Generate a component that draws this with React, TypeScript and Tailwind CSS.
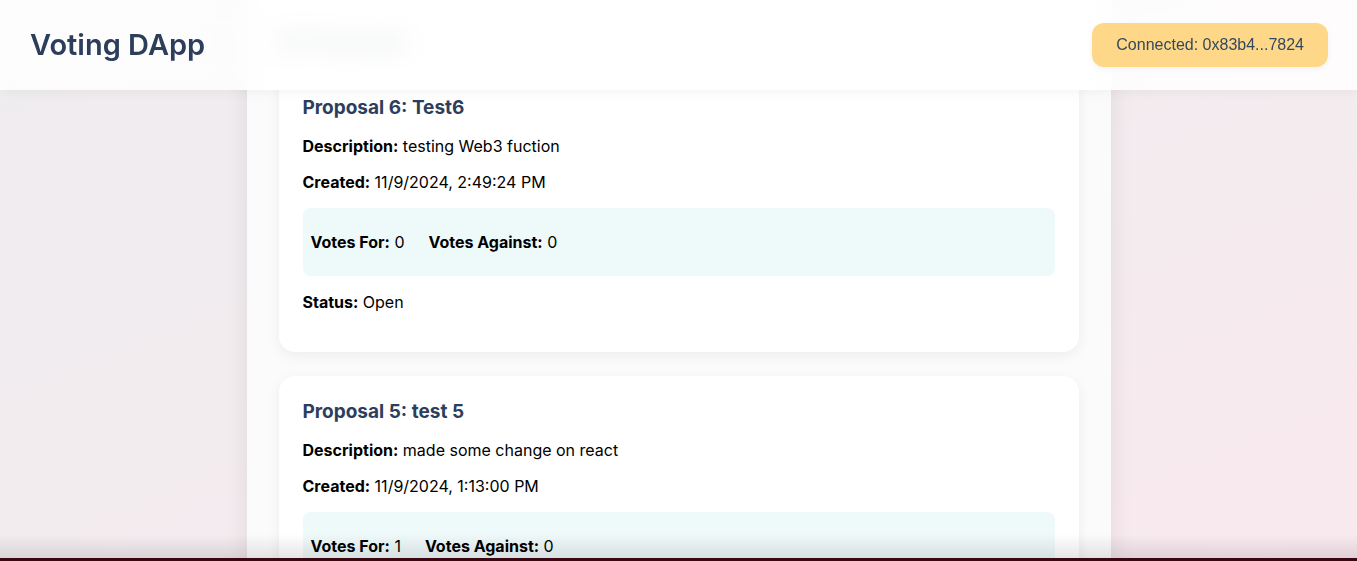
import React from 'react';

type Proposal = {
  id: number;
  name: string;
  description: string;
  created: string;
  votesFor: number;
  votesAgainst: number;
  open: boolean;
};

const proposals: Proposal[] = [
  { id: 6, name: 'Test6', description: 'testing Web3 fuction', created: '11/9/2024, 2:49:24 PM', votesFor: 0, votesAgainst: 0, open: true },
  { id: 5, name: 'test 5', description: 'made some change on react', created: '11/9/2024, 1:13:00 PM', votesFor: 1, votesAgainst: 0, open: true },
];

const ProposalCard: React.FC<{ p: Proposal }> = ({ p }) => (
  <div className="bg-white rounded-2xl p-6 shadow-[0_4px_14px_rgba(0,0,0,0.06)] flex flex-col gap-4">
    <h3 className="text-[19px] leading-6 font-bold text-[#2c3e5c]">
      Proposal {p.id}: {p.name}
    </h3>
    <p className="leading-5">
      <strong>Description:</strong> {p.description}
    </p>
    <p className="leading-5">
      <strong>Created:</strong> {p.created}
    </p>
    <div className="bg-[#eef9f9] rounded-lg px-2 py-6 flex gap-6 leading-5">
      <span><strong>Votes For:</strong> {p.votesFor}</span>
      <span><strong>Votes Against:</strong> {p.votesAgainst}</span>
    </div>
    <p className="leading-5 mb-4">
      <strong>Status:</strong> {p.open ? 'Open' : 'Closed'}
    </p>
  </div>
);

const App: React.FC = () => {
  return (
    <div className="relative h-screen overflow-hidden bg-gradient-to-br from-[#efedef] via-[#f3ecef] to-[#f9e9ee] text-black font-['Inter','Noto_Sans',sans-serif] text-base">
      <header className="absolute top-0 left-0 right-0 z-20 h-[90px] bg-white/85 backdrop-blur-md shadow-[0_2px_12px_rgba(0,0,0,0.05)] flex items-center justify-between pl-[30px] pr-[29px]">
        <h1 className="text-[29px] font-semibold text-[#2c3e5c]">Voting DApp</h1>
        <div className="bg-[#fed888] text-[#34495e] rounded-xl h-[44px] px-6 flex items-center shadow-[0_2px_6px_rgba(0,0,0,0.05)] font-['Liberation_Sans',Arial,sans-serif] text-base">
          Connected: 0x83b4...7824
        </div>
      </header>

      <main className="mx-auto w-[864px] min-h-full bg-[#fbfbfb] shadow-[0_0_24px_rgba(0,0,0,0.08)] px-8 pt-[30px]">
        <h2 className="text-xl leading-6 font-semibold text-[#2c3e5c] mb-[18px]">All Proposals</h2>
        <div className="flex flex-col gap-6">
          {proposals.map((p) => (
            <ProposalCard key={p.id} p={p} />
          ))}
        </div>
      </main>

      <div className="pointer-events-none absolute left-0 right-0 bottom-[3px] h-6 bg-gradient-to-b from-transparent to-black/10 z-10" />
      <div className="absolute left-0 right-0 bottom-0 h-[3px] bg-[#3a0612] z-10" />
    </div>
  );
};

export default App;
